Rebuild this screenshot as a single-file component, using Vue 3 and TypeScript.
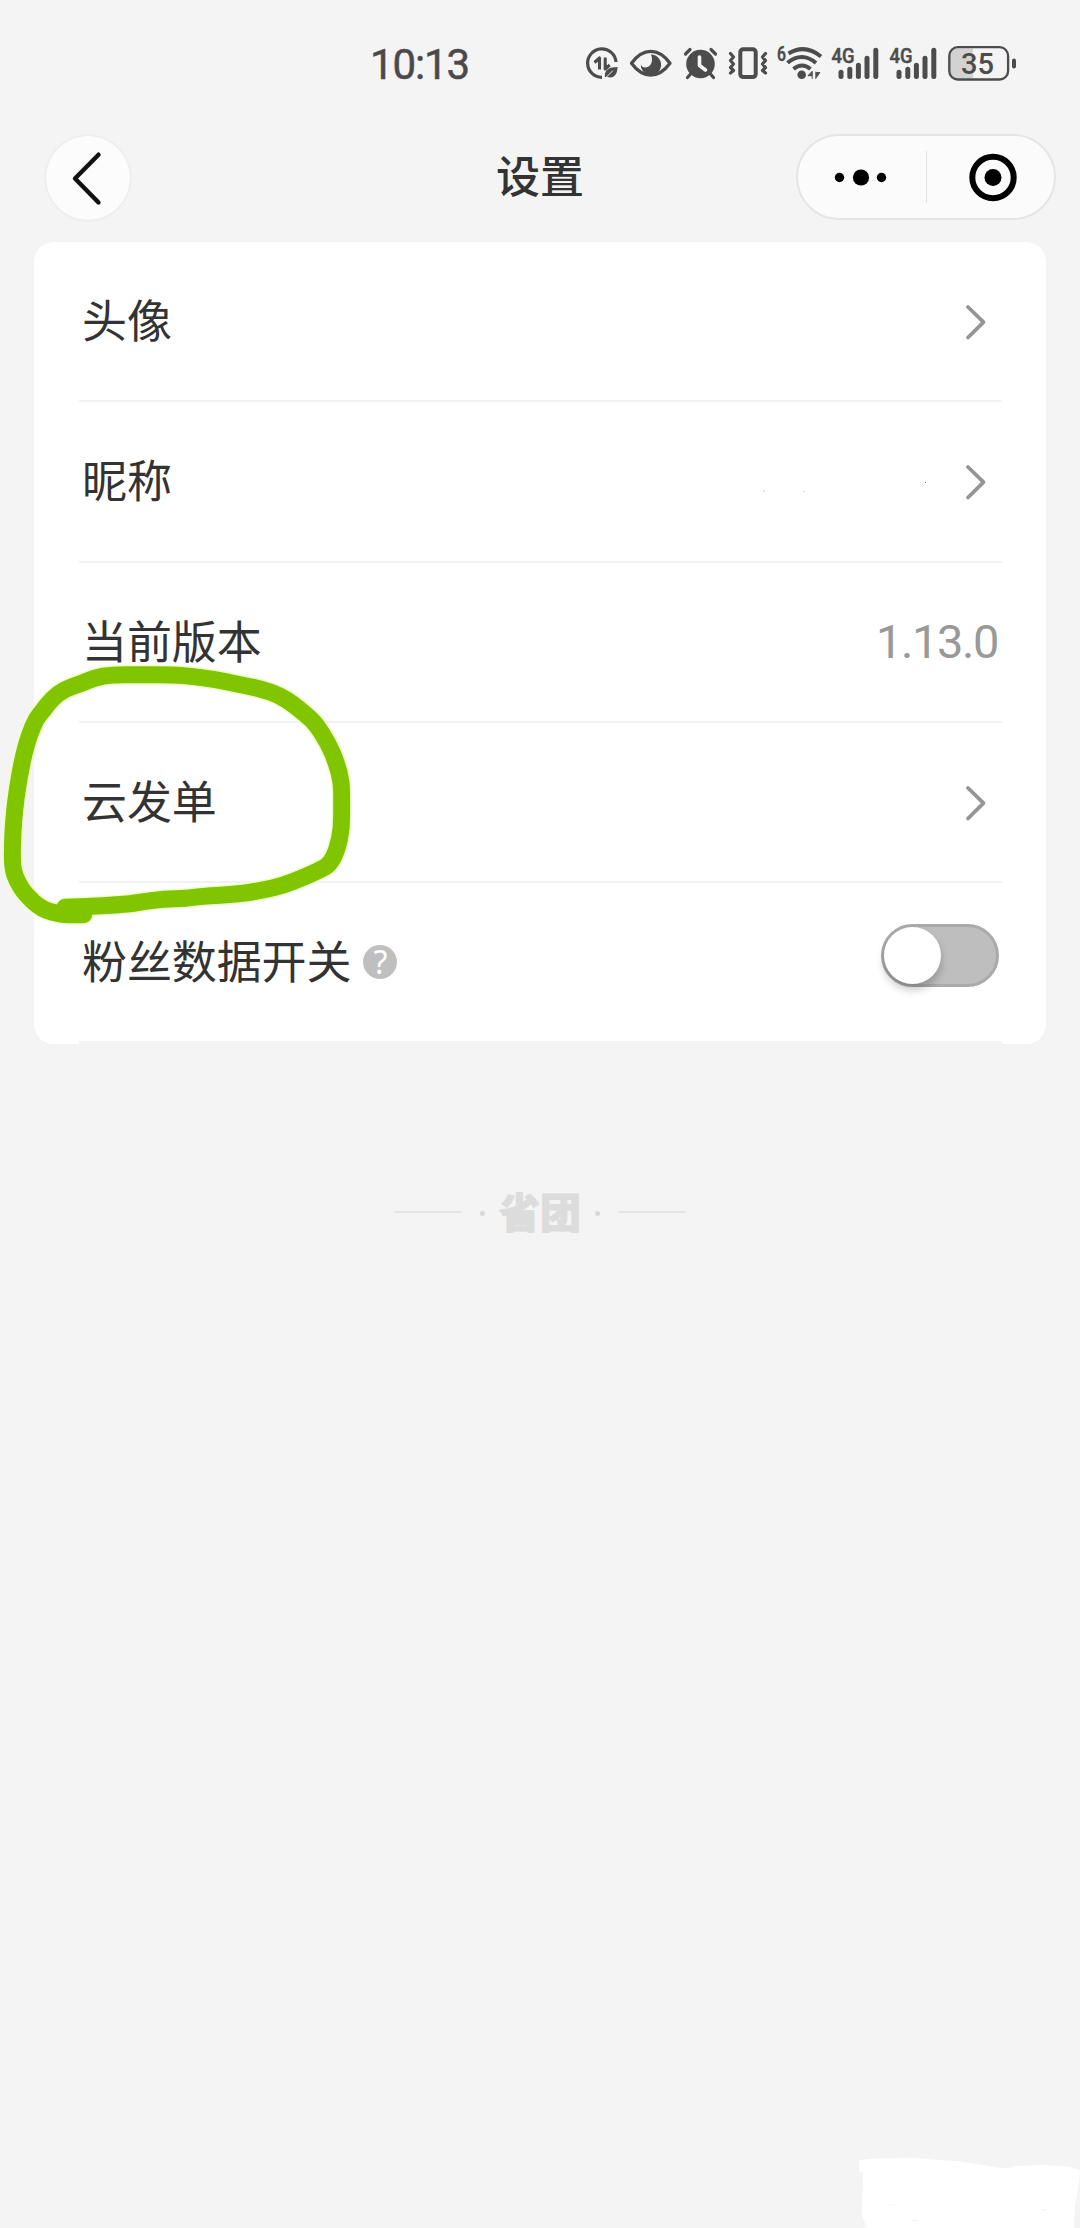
<script setup lang="ts">
import { ref } from 'vue'

type Row = { label: string; kind: 'link' | 'value' | 'switch'; value?: string }

const rows: Row[] = [
  { label: '头像', kind: 'link' },
  { label: '昵称', kind: 'link' },
  { label: '当前版本', kind: 'value', value: '1.13.0' },
  { label: '云发单', kind: 'link' },
  { label: '粉丝数据开关', kind: 'switch' },
]
const fansOn = ref(false)
const signalBars = [[838, 70], [846.8, 67], [855.4, 63], [864, 56], [872.8, 48]]

// Points of the marker stroke, joined through their midpoints for a smooth line.
const stroke: [number, number][] = [
  [195, 802], [260, 800], [380, 793], [430, 785], [490, 777], [560, 775], [600, 769], [720, 762], [790, 750], [850, 736],
  [910, 712], [960, 690], [990, 673], [1012, 628], [1025, 565], [1025, 490], [1025, 428], [1010, 370], [985, 310], [945, 248],
  [915, 222], [880, 193], [840, 167], [785, 147], [710, 132], [640, 117], [580, 110], [520, 104], [420, 104], [335, 104],
  [285, 113], [240, 132], [195, 147], [158, 174], [130, 210], [108, 237], [88, 285], [72, 340], [58, 410], [48, 475],
  [41, 540], [37, 610], [37, 682], [50, 722], [75, 762], [125, 808], [185, 824], [225, 824], [251, 824],
]
const strokePath = stroke.reduce((d, [x, y], i) => {
  if (i === 0) return `M${x} ${y}`
  const next = stroke[i + 1]
  return next ? `${d}Q${x} ${y} ${(x + next[0]) / 2} ${(y + next[1]) / 2}` : `${d}L${x} ${y}`
}, '')
</script>

<template>
  <div class="screen">
    <header class="status">
      <span class="time">10:13</span>
      <svg class="status-icons" width="440" height="50" viewBox="580 40 440 50" fill="none" stroke="#4c4c4c" stroke-linecap="round" stroke-linejoin="round">
        <!-- data saver -->
        <path d="M616 62A14.2 14.2 0 1 0 602 77.3" stroke-width="3.2" stroke-linecap="butt" />
        <path d="M594.5 62.5l5-4.5v11.5M605.200 57.500v11.500l4.500-4" stroke-width="3.1" stroke-linecap="butt" />
        <path d="M605 77c-1-7 4-10 12.500-10c0 7-3.500 12-10 10z" fill="#4c4c4c" stroke="none" />
        <path d="M605.500 78l7-7" stroke="#f4f4f4" stroke-width="1" />
        <!-- eye -->
        <path d="M631.500 63.300C643 47.500 658.500 47.500 670 63.300C658.500 79 643 79 631.500 63.300Z" stroke-width="3.3" />
        <path d="M651 54.500A10.200 10.200 0 1 1 640.800 63.500C641 71 656 68 651 54.500Z" fill="#4c4c4c" stroke="none" />
        <!-- alarm -->
        <circle cx="700.5" cy="64" r="14.3" fill="#4c4c4c" stroke="none" />
        <path d="M685.500 54l4.500-4.500M715.500 54l-4.500-4.500M691.500 73l-4 4.500M709.500 73l4 4.500" stroke-width="3.2" />
        <path d="M699.500 57v8.500l6 4.500" stroke="#f4f4f4" stroke-width="3.6" />
        <!-- vibrate -->
        <rect x="740.300" y="49.300" width="15.400" height="27.800" rx="3" stroke-width="4" />
        <path d="M730.500 53.500l3 3.500l-3 3.500l3 3.500l-3 3.500l3 3l-3 2.500M765.500 53.500l-3 3.500l3 3.500l-3 3.500l3 3.500l-3 3l3 2.500" stroke-width="3.2" />
        <!-- wifi -->
        <g stroke-width="4" stroke-linecap="butt">
          <path d="M788.500 53.500Q805 43.500 821 56.500" />
          <path d="M787.500 62.800Q802 51 816 63" />
          <path d="M793.500 69Q802 62 810.500 69" />
        </g>
        <circle cx="801.700" cy="74.800" r="4.300" fill="#4c4c4c" stroke="none" />
        <path d="M812.200 71.500v7M811.500 72l-3.500 3.700h3.500zM815.800 72v6.500M816.500 77v-4.500h3z" fill="#4c4c4c" stroke-width="1" />
        <!-- mobile signals -->
        <g v-for="dx in [0, 58]" :key="dx" :transform="`translate(${dx} 0)`">
          <path v-for="[x, y] in signalBars" :key="x" :d="`M${x + 3} ${y + 2.300}V76.500`" stroke-width="5" />
        </g>
        <g class="glyphs" fill="#4c4c4c" stroke="#4c4c4c" stroke-width=".5">
          <text x="777" y="61" font-size="20" textLength="9" lengthAdjust="spacingAndGlyphs">6</text>
          <text x="831.500" y="63" font-size="21" textLength="23" lengthAdjust="spacingAndGlyphs">4G</text>
          <text x="889.500" y="63" font-size="21" textLength="23" lengthAdjust="spacingAndGlyphs">4G</text>
        </g>
        <!-- battery -->
        <path d="M973 48.500H958q-8 0-8 8v14q0 8 8 8h15z" fill="#d2d2d2" stroke="none" />
        <rect x="949.300" y="47.200" width="58.800" height="32.300" rx="8.500" stroke-width="2.300" />
        <path d="M1014 60.500v6" stroke-width="4" />
        <text class="glyphs" x="961" y="73.500" font-size="30" fill="#4c4c4c" stroke="none" textLength="33" lengthAdjust="spacingAndGlyphs">35</text>
      </svg>
    </header>

    <nav class="nav">
      <button class="back" aria-label="返回">
        <svg width="84" height="84" viewBox="0 0 84 84"><path d="M52.500 18.700L29 42.500L52.500 66.500" fill="none" stroke="#111" stroke-width="4.400" stroke-linecap="round" stroke-linejoin="round" /></svg>
      </button>
      <h1 class="title">设置</h1>
      <div class="capsule">
        <svg width="128" height="84" viewBox="0 0 128 84"><circle cx="41.500" cy="42.500" r="4.700" /><circle cx="63" cy="42.500" r="8.100" /><circle cx="83.500" cy="42.500" r="4.700" /></svg>
        <i class="split" />
        <svg width="126" height="84" viewBox="0 0 126 84"><circle cx="66" cy="42.500" r="20.700" fill="none" stroke="#000" stroke-width="6" /><circle cx="66" cy="42.500" r="8.500" /></svg>
      </div>
    </nav>

    <main class="card">
      <div v-for="row in rows" :key="row.label" class="row">
        <span class="label">{{ row.label }}</span>
        <span v-if="row.kind === 'switch'" class="help">?</span>
        <span class="gap" />
        <svg v-if="row.kind === 'link'" class="arrow" width="24" height="40" viewBox="0 0 24 40"><path d="M4 5L19.500 20.200L4 35.500" fill="none" stroke="#959595" stroke-width="3.800" stroke-linecap="round" stroke-linejoin="round" /></svg>
        <span v-else-if="row.kind === 'value'" class="value">{{ row.value }}</span>
        <button v-else class="switch" :class="{ on: fansOn }" @click="fansOn = !fansOn"><i class="knob" /></button>
      </div>
    </main>

    <footer class="brand">
      <i class="line" /><i class="dot" /><span class="name">省团</span><i class="dot" /><i class="line" />
    </footer>

    <!-- hand-drawn marker around the cloud order row -->
    <svg class="marker" width="360" height="300" viewBox="0 0 1080 900" fill="none" stroke-linejoin="round" stroke-linecap="round">
      <path :d="strokePath" stroke="#edffcb" stroke-width="60" />
      <path :d="strokePath" stroke="#80c500" stroke-width="51" />
    </svg>
    <svg class="specks" width="166" height="14" viewBox="0 0 166 14"><path d="M1 10h1.500v2h-1.500zM41 11h2v1h-2z" fill="#ddd" /><path d="M163 2h1v1h-1z" fill="#777" /></svg>
    <svg class="patch" width="222" height="70" viewBox="858 2158 222 70"><path fill="#fff" d="M859 2160L873 2158.500L915 2158L960 2161.500L990 2166L1001 2168H1010L1013 2166L1045 2165L1070 2167L1080 2170L1078 2190L1075 2205L1074 2228H867L862 2216L863 2172H859Z" /><path fill="#f4f4f4" d="M889 2205l6-1v1l-6 1zM912 2220h6v1h-6zM1041 2209h6v1l-3 1z" /></svg>
  </div>
</template>

<style>
body { margin: 0; background: #f4f4f4; }
</style>

<style scoped>
.screen {
  position: relative;
  width: 1080px;
  height: 2228px;
  overflow: hidden;
  background: #f4f4f4;
  font-family: "Noto Sans CJK SC", sans-serif;
  color: #333;
}
i { display: block; }
button { padding: 0; font: inherit; }
.status {
  display: flex;
  height: 134px;
  box-sizing: border-box;
  padding: 40px 60px 0 370px;
  justify-content: space-between;
}
.time {
  font: 400 42px/50px Roboto, sans-serif;
  letter-spacing: -1.1px;
  color: #4a4a4a;
  -webkit-text-stroke: 0.5px #4a4a4a;
}
.status-icons { flex: none; }
.glyphs { font-family: Roboto, sans-serif; font-weight: 500; }
.nav {
  display: flex;
  align-items: center;
  height: 86px;
  padding: 0 24px 0 46px;
}
.back {
  width: 84px;
  height: 84px;
  margin-top: 2px;
  border: 0;
  border-radius: 50%;
  background: #fcfcfc;
  box-shadow: 0 0 3px #ddd;
}
.back svg { display: block; }
.title {
  width: 88px;
  margin: -7px auto 0 366px;
  font-size: 44px;
  line-height: 64px;
  font-weight: 500;
  white-space: nowrap;
}
.capsule {
  display: flex;
  align-items: center;
  box-sizing: border-box;
  width: 260px;
  height: 86px;
  border: 2px solid #e5e5e5;
  border-radius: 43px;
  background: #fbfbfb;
}
.split { width: 1px; height: 52px; background: #e2e2e2; }
.card {
  margin: 22px 34px 0;
  height: 802px;
  border-radius: 20px;
  background: #fff;
}
.row {
  display: flex;
  align-items: center;
  box-sizing: border-box;
  height: 160.300px;
  margin: 0 44px 0 45px;
  padding: 0 3px;
  border-bottom: 2px solid #f2f2f2;
}
.row:last-child { height: 160.800px; border-bottom: 3px solid #f4f4f4; }
.label { margin-top: -4px; font-size: 45px; line-height: 66px; font-weight: 400; letter-spacing: -0.1px; white-space: nowrap; }
.help {
  width: 34px;
  height: 34px;
  margin-left: 12px;
  border-radius: 50%;
  background: #bfbfbf;
  color: #fff;
  text-align: center;
  font: 400 32px/34px "Noto Sans", sans-serif;
}
.gap { flex: 1; }
.arrow { margin: 2px 11px 0 0; }
.value { font: 400 47px/60px Roboto, sans-serif; letter-spacing: -1.4px; margin-right: 1px; color: #999; }
.switch {
  box-sizing: border-box;
  width: 118px;
  height: 63px;
  margin: -14px 0 0 0;
  border: 3px solid #aaa;
  border-radius: 32px;
  background: #bebebe;
}
.knob {
  width: 57px;
  height: 57px;
  border-radius: 50%;
  background: #fff;
  box-shadow: 0 6px 8px rgba(0, 0, 0, 0.22);
}
.switch.on { background: #80c500; }
.switch.on .knob { margin-left: auto; }
.brand {
  display: flex;
  align-items: center;
  justify-content: center;
  height: 60px;
  margin-top: 138px;
}
.line { width: 68px; height: 2px; background: #e5e5e5; }
.dot { width: 5px; height: 5px; margin: 2px 14px 0 18px; border-radius: 50%; background: #d8d8d8; }
.name + .dot { margin: 2px 18px 0 14px; }
.name { margin-top: -4px; font-size: 41px; font-weight: 900; line-height: 60px; color: #dcdcdc; -webkit-text-stroke: 1px #dcdcdc; }
.marker { position: absolute; left: 0; top: 640px; }
.specks { position: absolute; left: 762px; top: 480px; }
.patch { position: absolute; left: 858px; top: 2158px; }
</style>
